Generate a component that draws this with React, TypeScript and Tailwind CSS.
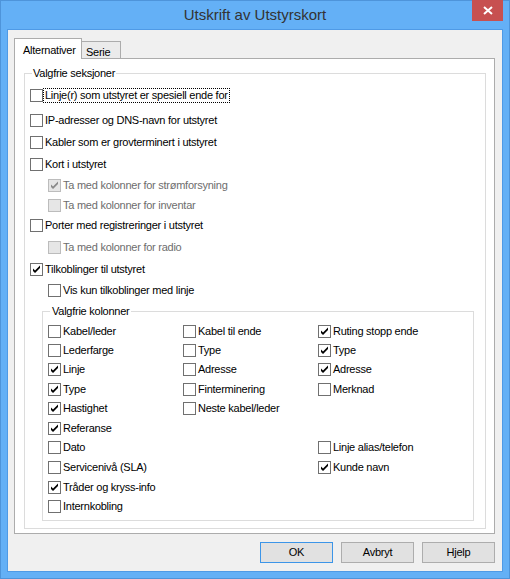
import type { ReactNode } from 'react'

type Item = { label: string; checked?: boolean; disabled?: boolean; focus?: boolean }

function Box({ checked, disabled }: { checked?: boolean; disabled?: boolean }) {
  return (
    <span
      className={`flex h-[13px] w-[13px] shrink-0 items-center justify-center border ${
        disabled ? 'border-[#bcbcbc] bg-[#e6e6e6]' : 'border-[#707070] bg-white'
      }`}
    >
      {checked && (
        <svg width="11" height="11" viewBox="0 0 11 11" className="block">
          <polygon points="2,4.5 4,6.5 9,1.5 9,4 4,9 2,7" fill={disabled ? '#8a8a8a' : '#000'} />
        </svg>
      )}
    </span>
  )
}

function Check({ label, checked, disabled, focus, className = '' }: Item & { className?: string }) {
  return (
    <div className={`flex h-[13px] items-center ${className}`}>
      <Box checked={checked} disabled={disabled} />
      <span
        className={`whitespace-nowrap border px-[1px] leading-[13px] ${
          focus ? 'border-dotted border-black' : 'border-transparent'
        } ${disabled ? 'text-[#6d6d6d]' : 'text-black'}`}
      >
        {label}
      </span>
    </div>
  )
}

function Group({ title, className, legendClass, children }: { title: string; className: string; legendClass: string; children: ReactNode }) {
  return (
    <fieldset className={`border border-[#dcdcdc] ${className}`}>
      <legend className={`leading-[12px] text-black ${legendClass}`}>{title}</legend>
      {children}
    </fieldset>
  )
}

const sections: (Item & { cls: string })[] = [
  { label: 'Linje(r) som utstyret er spesiell ende for', focus: true, cls: 'mt-[10px]' },
  { label: 'IP-adresser og DNS-navn for utstyret', cls: 'mt-[12px]' },
  { label: 'Kabler som er grovterminert i utstyret', cls: 'mt-[9px]' },
  { label: 'Kort i utstyret', cls: 'mt-[9px]' },
  { label: 'Ta med kolonner for strømforsyning', checked: true, disabled: true, cls: 'mt-[8px] ml-[18px]' },
  { label: 'Ta med kolonner for inventar', disabled: true, cls: 'mt-[7px] ml-[18px]' },
  { label: 'Porter med registreringer i utstyret', cls: 'mt-[7px]' },
  { label: 'Ta med kolonner for radio', disabled: true, cls: 'mt-[9px] ml-[18px]' },
  { label: 'Tilkoblinger til utstyret', checked: true, cls: 'mt-[9px]' },
  { label: 'Vis kun tilkoblinger med linje', cls: 'mt-[8px] ml-[18px]' },
]

const columns: (Item | null)[][] = [
  [{ label: 'Kabel/leder' }, { label: 'Kabel til ende' }, { label: 'Ruting stopp ende', checked: true }],
  [{ label: 'Lederfarge' }, { label: 'Type' }, { label: 'Type', checked: true }],
  [{ label: 'Linje', checked: true }, { label: 'Adresse' }, { label: 'Adresse', checked: true }],
  [{ label: 'Type', checked: true }, { label: 'Finterminering' }, { label: 'Merknad' }],
  [{ label: 'Hastighet', checked: true }, { label: 'Neste kabel/leder' }, null],
  [{ label: 'Referanse', checked: true }, null, null],
  [{ label: 'Dato' }, null, { label: 'Linje alias/telefon' }],
  [{ label: 'Servicenivå (SLA)' }, null, { label: 'Kunde navn', checked: true }],
  [{ label: 'Tråder og kryss-info', checked: true }, null, null],
  [{ label: 'Internkobling' }, null, null],
]

function Button({ children, primary }: { children: ReactNode; primary?: boolean }) {
  return (
    <button
      className={`flex h-[21px] w-[73px] items-center justify-center border bg-[#e1e1e1] text-black ${
        primary ? 'border-[#3c95e8]' : 'border-[#adadad]'
      }`}
    >
      {children}
    </button>
  )
}

export default function App() {
  return (
    <div className="flex h-[579px] w-[510px] flex-col border border-[#4e94da] bg-[#64b0f6] font-['Liberation_Sans',Arial,sans-serif] text-[11px] tracking-[-0.25px]">
      {/* title bar */}
      <div className="relative flex h-[28px] shrink-0 items-center justify-center">
        <span className="text-[15px] tracking-normal text-[#333]">Utskrift av Utstyrskort</span>
        <div className="absolute right-[6px] top-[-1px] flex h-[21px] w-[31px] items-center justify-center bg-[#c75050]">
          <svg width="10" height="9" viewBox="0 0 10 9">
            <path d="M1 1 L9 8 M9 1 L1 8" stroke="#fff" strokeWidth="2" />
          </svg>
        </div>
      </div>

      {/* client */}
      <div className="mx-[6px] mb-[6px] flex flex-1 flex-col border border-[#4f9ae6] bg-[#f0f0f0]">
        <div className="flex h-[28px] items-end pl-[6px] pt-[8px]">
          <div className="relative z-10 mb-[-1px] flex h-[21px] w-[68px] items-start border-x border-t border-[#acacac] bg-white pl-[8px] pt-[3px]">
            Alternativer
          </div>
          <div className="flex h-[17px] w-[39px] items-start border-r border-t border-[#acacac] bg-[#ebebeb] pl-[4px] pt-[2px]">
            Serie
          </div>
        </div>

        {/* tab page */}
        <div className="ml-[6px] mr-[7px] flex h-[476px] flex-col border border-[#acacac] bg-white pb-[4px] pl-[9px] pr-[8px] pt-[8px]">
          <Group title="Valgfrie seksjoner" className="flex flex-1 flex-col" legendClass="ml-[7px] px-[1px]">
            <div className="flex flex-col pl-[5px]">
              {sections.map((s) => (
                <Check key={s.label} {...s} className={s.cls} />
              ))}
              <Group title="Valgfrie kolonner" className="ml-[12px] mr-[11px] mt-[8px] h-[216px]" legendClass="ml-[7px] px-[2px]">
                <div className="grid grid-cols-[135px_135px_1fr] grid-rows-[19px_19px_20px_19px_20px_19px_20px_20px_19px_19px] pl-[5px] pt-[8px]">
                  {columns.flatMap((row, r) =>
                    row.map((cell, c) => (
                      <div key={`${r}-${c}`}>{cell && <Check {...cell} />}</div>
                    )),
                  )}
                </div>
              </Group>
            </div>
          </Group>
        </div>

        <div className="mt-[8px] flex justify-end gap-[8px] pr-[7px]">
          <Button primary>OK</Button>
          <Button>Avbryt</Button>
          <Button>Hjelp</Button>
        </div>
      </div>
    </div>
  )
}
